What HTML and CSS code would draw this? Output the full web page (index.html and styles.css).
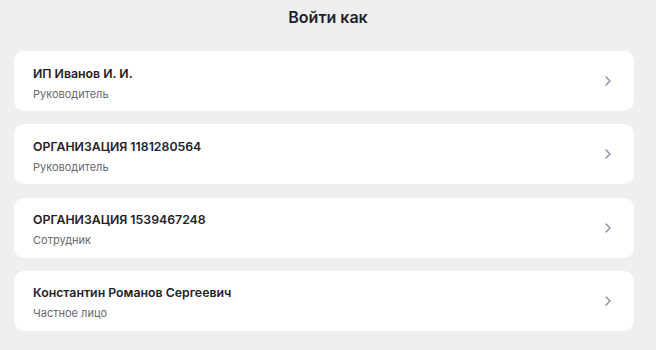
FILE: index.html
```html
<!DOCTYPE html>
<html lang="ru">
<head>
<meta charset="utf-8">
<link rel="stylesheet" href="styles.css">
</head>
<body>
<div class="page">
  <h1 class="title">Войти как</h1>
  <ul class="list">
    <li class="card">
      <div class="info"><div class="name">ИП Иванов И. И.</div><div class="role">Руководитель</div></div>
      <svg class="chev" width="8" height="12" viewBox="0 0 8 12"><path d="M2 2l4 4-4 4" fill="none" stroke="#8a90a6" stroke-width="1.4" stroke-linecap="round" stroke-linejoin="round"/></svg>
    </li>
    <li class="card">
      <div class="info"><div class="name">ОРГАНИЗАЦИЯ 1181280564</div><div class="role">Руководитель</div></div>
      <svg class="chev" width="8" height="12" viewBox="0 0 8 12"><path d="M2 2l4 4-4 4" fill="none" stroke="#8a90a6" stroke-width="1.4" stroke-linecap="round" stroke-linejoin="round"/></svg>
    </li>
    <li class="card">
      <div class="info"><div class="name">ОРГАНИЗАЦИЯ 1539467248</div><div class="role">Сотрудник</div></div>
      <svg class="chev" width="8" height="12" viewBox="0 0 8 12"><path d="M2 2l4 4-4 4" fill="none" stroke="#8a90a6" stroke-width="1.4" stroke-linecap="round" stroke-linejoin="round"/></svg>
    </li>
    <li class="card">
      <div class="info"><div class="name">Константин Романов Сергеевич</div><div class="role">Частное лицо</div></div>
      <svg class="chev" width="8" height="12" viewBox="0 0 8 12"><path d="M2 2l4 4-4 4" fill="none" stroke="#8a90a6" stroke-width="1.4" stroke-linecap="round" stroke-linejoin="round"/></svg>
    </li>
  </ul>
</div>
</body>
</html>
```
FILE: styles.css
```css
html, body { margin: 0; padding: 0; }
body {
  background: #efefef;
  font-family: Inter, "Noto Sans", sans-serif;
  width: 656px;
  height: 350px;
  overflow: hidden;
}
.page {
  padding: 6px 22px 0 14px;
}
.title {
  margin: 0;
  text-align: center;
  font-size: 16px;
  font-weight: 600;
  color: #1f2228;
  line-height: 22px;
  padding-left: 8px;
}
.list {
  list-style: none;
  margin: 23px 0 0;
  padding: 0;
  display: flex;
  flex-direction: column;
  gap: 13.3px;
}
.card {
  background: #fff;
  border-radius: 10px;
  height: 60px;
  box-sizing: border-box;
  padding: 0 22px 0 19px;
  display: flex;
  align-items: center;
  justify-content: space-between;
}
.info {
  display: flex;
  flex-direction: column;
  gap: 6px;
  margin-top: 4px;
}
.name {
  font-size: 12.3px;
  font-weight: 600;
  color: #1f2228;
  line-height: 15px;
}
.role {
  font-size: 11px;
  color: #676a70;
  line-height: 14px;
}
.chev { display: block; }
```
